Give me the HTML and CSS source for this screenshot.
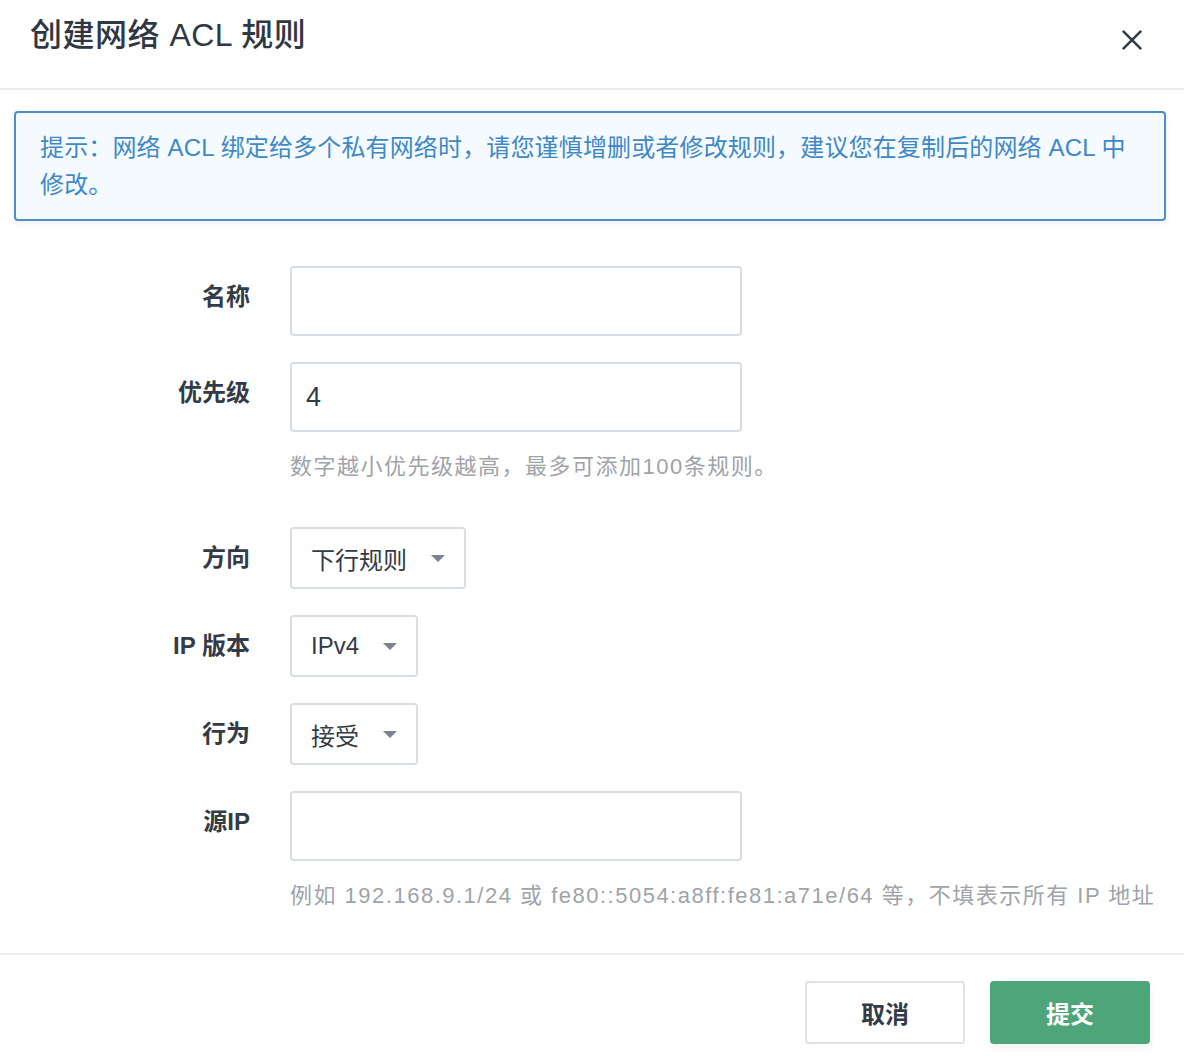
FILE: index.html
```html
<!DOCTYPE html>
<html lang="zh-CN">
<head>
    <meta charset="UTF-8">
    <meta name="viewport" content="width=device-width, initial-scale=1.0">
    <title>创建网络 ACL 规则</title>
    <link rel="stylesheet" href="styles.css">
</head>
<body>
    <div class="modal">
        <!-- Header -->
        <div class="modal-header">
            <h1 class="modal-title">创建网络 ACL 规则</h1>
            <svg class="close-icon" viewBox="0 0 24 24">
                <path d="M2 2l20 20M22 2L2 22"/>
            </svg>
        </div>

        <div class="alert">
            提示：网络 ACL 绑定给多个私有网络时，请您谨慎增删或者修改规则，建议您在复制后的网络 ACL 中修改。
        </div>

        <!-- Form -->
        <form class="form">
            <div class="form-row">
                <label class="form-label">名称</label>
                <div class="form-field">
                    <input class="text-input" type="text">
                </div>
            </div>

            <div class="form-row">
                <label class="form-label">优先级</label>
                <div class="form-field">
                    <input class="text-input" type="text" value="4">
                    <div class="form-hint">数字越小优先级越高，最多可添加100条规则。</div>
                </div>
            </div>

            <div class="form-row">
                <label class="form-label">方向</label>
                <div class="form-field">
                    <div class="select">
                        <span>下行规则</span>
                        <div class="select-arrow"></div>
                    </div>
                </div>
            </div>

            <div class="form-row">
                <label class="form-label">IP 版本</label>
                <div class="form-field">
                    <div class="select">
                        <span>IPv4</span>
                        <div class="select-arrow"></div>
                    </div>
                </div>
            </div>

            <div class="form-row">
                <label class="form-label">行为</label>
                <div class="form-field">
                    <div class="select">
                        <span>接受</span>
                        <div class="select-arrow"></div>
                    </div>
                </div>
            </div>

            <div class="form-row">
                <label class="form-label">源IP</label>
                <div class="form-field">
                    <input class="text-input" type="text">
                    <div class="form-hint hint-last">例如 192.168.9.1/24 或 fe80::5054:a8ff:fe81:a71e/64 等，不填表示所有 IP 地址</div>
                </div>
            </div>
        </form>

        <!-- Footer -->
        <div class="modal-footer">
            <button class="btn btn-cancel" type="button">取消</button>
            <button class="btn btn-submit" type="button">提交</button>
        </div>
    </div>
</body>
</html>
```

FILE: styles.css
```css
* {
    margin: 0;
    padding: 0;
    box-sizing: border-box;
}

body {
    font-family: "Liberation Sans", "Noto Sans CJK SC", sans-serif;
    background: white;
    color: #333b47;
}

.modal {
    width: 1184px;
    min-height: 1064px;
    background: white;
}

/* Header */
.modal-header {
    height: 90px;
    padding: 0 41px 0 30px;
    display: flex;
    justify-content: space-between;
    align-items: flex-start;
    border-bottom: 2px solid #e9eaec;
}

.modal-title {
    font-size: 32px;
    font-weight: 500;
    line-height: 38px;
    margin-top: 16px;
    letter-spacing: 0.5px;
    color: #2f3744;
}

.close-icon {
    width: 22px;
    height: 22px;
    margin-top: 29px;
    fill: none;
    stroke: #333d4a;
    stroke-width: 2.8;
}

/* Alert */
.alert {
    margin: 21px 18px 0 14px;
    padding: 16px 24px;
    border: 2px solid #4b8ec8;
    border-radius: 4px;
    background: #f5faff;
    color: #3f88c6;
    font-size: 24px;
    line-height: 37px;
    letter-spacing: 0.15px;
    box-shadow: 0 3px 6px rgba(0,0,0,0.06);
}

/* Form */
.form {
    display: flex;
    flex-direction: column;
    gap: 26px;
    padding: 45px 0 40px;
}

.form-row {
    display: flex;
    align-items: flex-start;
}

.form-label {
    width: 250px;
    padding-top: 13px;
    text-align: right;
    font-size: 24px;
    font-weight: 700;
    line-height: 36px;
    color: #333b47;
}

.form-field {
    margin-left: 40px;
}

.text-input {
    display: block;
    width: 452px;
    height: 70px;
    padding: 0 14px;
    border: 2px solid #d8dde5;
    border-radius: 4px;
    font-family: inherit;
    font-size: 27px;
    color: #333b47;
    outline: none;
}

.form-hint {
    margin: 18px 0 17px;
    font-size: 22px;
    line-height: 34px;
    letter-spacing: 1.5px;
    color: #a0a3a8;
    white-space: nowrap;
}

.hint-last {
    margin-bottom: 0;
}

.select {
    display: inline-flex;
    align-items: center;
    height: 62px;
    padding: 0 19px 0 19px;
    border: 2px solid #d8dde5;
    border-radius: 4px;
    font-size: 24px;
    color: #333b47;
}

.select-arrow {
    width: 0;
    height: 0;
    margin-left: 24px;
    border-left: 7px solid transparent;
    border-right: 7px solid transparent;
    border-top: 7px solid #7d838c;
}

/* Footer */
.modal-footer {
    display: flex;
    justify-content: flex-end;
    gap: 25px;
    padding: 26px 34px 21px;
    border-top: 2px solid #ebedef;
}

.btn {
    width: 160px;
    height: 63px;
    border-radius: 4px;
    font-family: inherit;
    font-size: 24px;
    font-weight: 700;
    cursor: pointer;
}

.btn-cancel {
    background: white;
    border: 2px solid #dfe3e8;
    color: #333b47;
}

.btn-submit {
    background: #4fa57a;
    border: none;
    color: white;
    box-shadow: 0 4px 8px rgba(0,0,0,0.06);
}
```
